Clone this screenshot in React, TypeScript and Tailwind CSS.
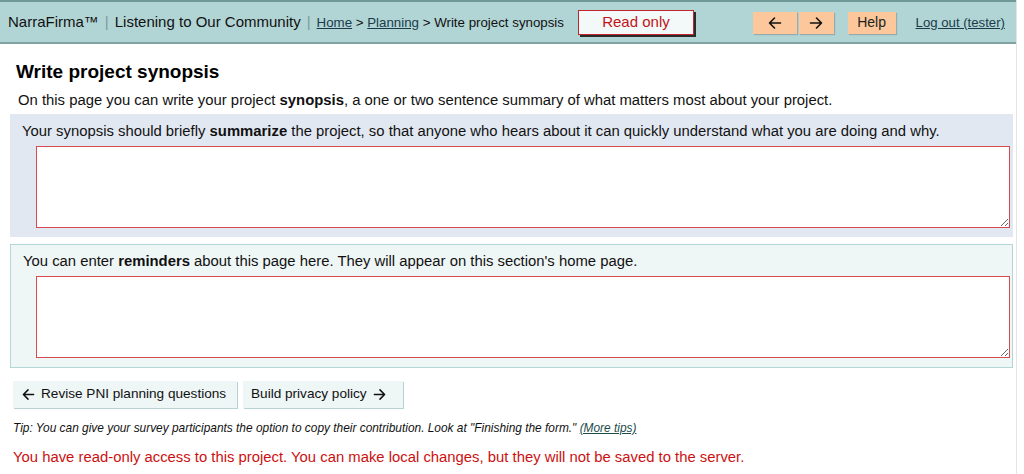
import React from "react";

const font = { fontFamily: '"Liberation Sans", Arial, Helvetica, sans-serif' };

const ArrowLeft = ({ size = 14 }: { size?: number }) => (
  <svg width={size} height={size} viewBox="0 0 14 14" fill="none" stroke="currentColor" strokeWidth="1.6" strokeLinecap="round" strokeLinejoin="round">
    <path d="M12.5 7H1.5M6.5 2L1.5 7l5 5" />
  </svg>
);

const ArrowRight = ({ size = 14 }: { size?: number }) => (
  <svg width={size} height={size} viewBox="0 0 14 14" fill="none" stroke="currentColor" strokeWidth="1.6" strokeLinecap="round" strokeLinejoin="round">
    <path d="M1.5 7h11M7.5 2l5 5-5 5" />
  </svg>
);

const HeaderBar = () => {
  return (
    <div className="flex items-center h-[44px] bg-[#b1d5d5] border-t-2 border-t-[#6f9898] border-b-2 border-b-[#7fa3a3] pl-[8px] pr-[11px] pt-[1px] text-[15px] text-[#111]">
      <span>NarraFirma™</span>
      <span className="mx-[6px] text-[#7a9a9a]">|</span>
      <span>Listening to Our Community</span>
      <span className="mx-[6px] text-[#7a9a9a]">|</span>
      <span className="text-[13.3px]">
        <a className="underline text-[#1b3b4b]">Home</a> &gt;{" "}
        <a className="underline text-[#1b3b4b]">Planning</a> &gt; Write project synopsis
      </span>
      <button className="ml-[14px] w-[116px] h-[25px] bg-[#f3f8f8] border border-[#c0272d] shadow-[2px_2px_0_#2b2b2b] text-[#c0141b] text-[15px]">
        Read only
      </button>
      <div className="ml-auto flex items-center">
        <button className="w-[44px] h-[22px] bg-[#fcc89b] shadow-[1px_1px_1px_#9aa] flex items-center justify-center text-[#111]">
          <ArrowLeft />
        </button>
        <button className="ml-[2px] w-[35px] h-[22px] bg-[#fcc89b] shadow-[1px_1px_1px_#9aa] flex items-center justify-center text-[#111]">
          <ArrowRight />
        </button>
        <button className="ml-[14px] w-[48px] h-[22px] bg-[#fcc89b] shadow-[1px_1px_1px_#9aa] text-[14px] text-[#222]">
          Help
        </button>
        <a className="ml-[20px] underline text-[13.2px] text-[#1b3b4b]">Log out (tester)</a>
      </div>
    </div>
  );
};

export default function App() {
  return (
    <div style={font} className="w-[1024px] h-[474px] overflow-hidden bg-white flex">
      <div className="w-[1016px] shrink-0">
        <HeaderBar />
        <div className="pl-[10px] pr-[3px]">
          <h1 className="text-[19px] font-bold text-black pl-[6px] pt-[17px] leading-[22px]">Write project synopsis</h1>
          <p className="text-[14.85px] text-[#111] pl-[8px] mt-[8px] leading-[18px]">
            On this page you can write your project <b>synopsis</b>, a one or two sentence summary of what matters most about your project.
          </p>

          <div className="mt-[5px] bg-[#e2e8f2] h-[123px] pt-[8px] pl-[12px] pr-[3px]">
            <p className="text-[14.85px] text-[#111] leading-[18px]">
              Your synopsis should briefly <b>summarize</b> the project, so that anyone who hears about it can quickly understand what you are doing and why.
            </p>
            <textarea className="block ml-[14px] mt-[6px] w-[974px] h-[82px] bg-white border border-[#d6494e] resize-y" />
          </div>

          <div className="mt-[7px] bg-[#eff6f6] border border-[#b4d6d6] h-[124px] pt-[7px] pl-[12px] pr-[2px]">
            <p className="text-[14.85px] text-[#111] leading-[18px]">
              You can enter <b>reminders</b> about this page here. They will appear on this section's home page.
            </p>
            <textarea className="block ml-[13px] mt-[6px] w-[974px] h-[82px] bg-white border border-[#d6494e] resize-y" />
          </div>

          <div className="flex gap-[6px] mt-[13px] pl-[3px]">
            <button className="flex items-center gap-[6px] w-[224px] h-[27px] px-[9px] bg-[#eef6f6] shadow-[1px_1px_0_#b7d2d2] text-[13.6px] text-[#111]">
              <ArrowLeft size={13} /> Revise PNI planning questions
            </button>
            <button className="flex items-center gap-[6px] w-[160px] h-[27px] px-[8px] bg-[#eef6f6] shadow-[1px_1px_0_#b7d2d2] text-[13.6px] text-[#111]">
              Build privacy policy <ArrowRight size={13} />
            </button>
          </div>

          <p className="mt-[13px] pl-[3px] text-[11.9px] italic text-[#111] leading-[14px]">
            Tip: You can give your survey participants the option to copy their contribution. Look at "Finishing the form."{" "}
            <a className="underline text-[#1b4b4b]">(More tips)</a>
          </p>

          <p className="mt-[13px] pl-[3px] text-[14.85px] text-[#cc1010] leading-[18px]">
            You have read-only access to this project. You can make local changes, but they will not be saved to the server.
          </p>
        </div>
      </div>
      <div className="flex-1 border-l border-[#e4e4e4] bg-white" />
    </div>
  );
}
